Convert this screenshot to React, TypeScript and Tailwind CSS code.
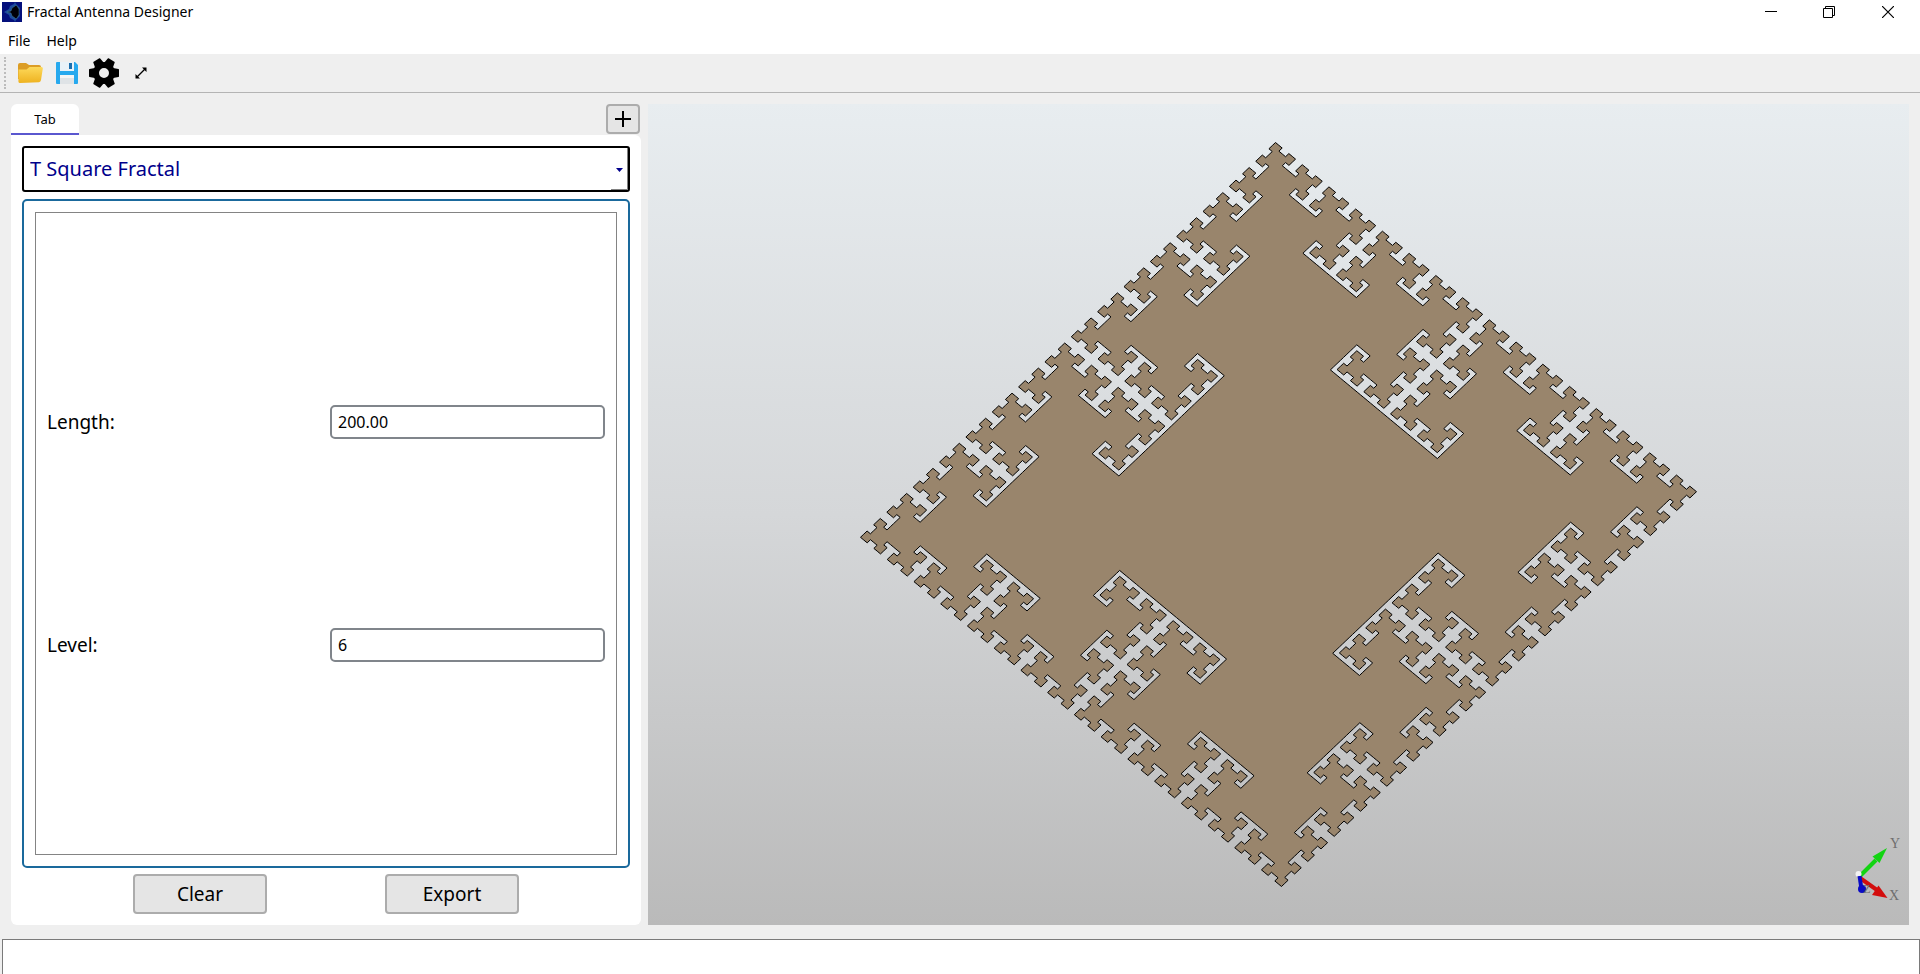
import { useState } from "react";

const LEVELS = 6;
const UNIT = 2 ** (LEVELS - 1);
const EXTENT = 2 * UNIT - 1;
const SIZE = 2 * EXTENT;

/** Outline of the union of all T-square squares, in cells with the origin at the top left corner. */
function tSquarePath(): string {
  const cells = new Uint8Array(SIZE * SIZE);
  const add = (cx: number, cy: number, half: number) => {
    for (let y = cy - half; y < cy + half; y++) {
      cells.fill(1, y * SIZE + cx - half, y * SIZE + cx + half);
    }
    if (half === 1) return;
    for (const sx of [-1, 1]) for (const sy of [-1, 1]) add(cx + sx * half, cy + sy * half, half / 2);
  };
  add(EXTENT, EXTENT, UNIT);

  const filled = (x: number, y: number) => x >= 0 && y >= 0 && x < SIZE && y < SIZE && cells[y * SIZE + x] === 1;
  const edges = new Map<string, [number, number][]>();
  const edge = (x1: number, y1: number, x2: number, y2: number) => {
    const key = `${x1},${y1}`;
    const list = edges.get(key);
    if (list) list.push([x2, y2]);
    else edges.set(key, [[x2, y2]]);
  };
  for (let y = 0; y < SIZE; y++) {
    for (let x = 0; x < SIZE; x++) {
      if (!filled(x, y)) continue;
      if (!filled(x, y - 1)) edge(x, y, x + 1, y);
      if (!filled(x + 1, y)) edge(x + 1, y, x + 1, y + 1);
      if (!filled(x, y + 1)) edge(x + 1, y + 1, x, y + 1);
      if (!filled(x - 1, y)) edge(x, y + 1, x, y);
    }
  }

  let path = "";
  for (const [start, list] of edges) {
    while (list.length > 0) {
      path += `M${start}`;
      let [x, y] = list.pop()!;
      while (`${x},${y}` !== start) {
        path += `L${x},${y}`;
        [x, y] = edges.get(`${x},${y}`)!.pop()!;
      }
      path += "Z";
    }
  }
  return path;
}

const FRACTAL = tSquarePath();

function AppIcon() {
  return (
    <svg viewBox="0 0 20 20" className="size-5" aria-hidden="true">
      <rect width="20" height="20" fill="#04107c" />
      <path d="M2 10l5-3 1-3 4-2 1-2 1 2 4 4-1 4 1 4-4 4-1 2-1-2-4-2-1-3z" fill="#1d4c9c" />
      <path d="M5 10l4-1 1-3 3-2 1-1 1 1 2 3v6l-2 3-1 1-1-1-3-2-1-3z" fill="#000008" stroke="#3f7f9a" strokeWidth=".5" />
    </svg>
  );
}

function FolderIcon() {
  return (
    <svg viewBox="0 0 26 22" className="h-[22px] w-[26px]" aria-hidden="true">
      <defs>
        <linearGradient id="folder" x1="0" y1="0" x2="0" y2="1">
          <stop offset="0" stopColor="#fdd95a" />
          <stop offset="1" stopColor="#eeb220" />
        </linearGradient>
      </defs>
      <path d="M1 3q0-2 2-2h6l3 2h10q2 0 2 2v12H1z" fill="#dc9d25" />
      <path d="M1.500 7.500h8l3-2.500h12q1.500 0 1.300 1.500L24 18q-.3 2-2 2.200L3 21q-1.500 0-1.600-1.500z" fill="url(#folder)" />
    </svg>
  );
}

function SaveIcon() {
  return (
    <svg viewBox="0 0 24 24" className="size-6" aria-hidden="true">
      <path d="M1 2q0-1 1-1h18l3 3v18q0 1-1 1H2q-1 0-1-1z" fill="#27a9ee" />
      <path d="M5 1h14v9H5z" fill="#e9f2f8" />
      <path d="M14 2h3v6h-3z" fill="#1c6fae" />
      <path d="M5 14h14v9H5z" fill="#dfe3e6" />
      <path d="M5 14h14v3H5z" fill="#f5f5f5" />
    </svg>
  );
}

function GearIcon() {
  return (
    <svg viewBox="-15 -15 30 30" className="size-[30px]" aria-hidden="true">
      <circle r="8" fill="none" stroke="#000" strokeWidth="6" />
      {[0, 60, 120, 180, 240, 300].map((angle) => (
        <path key={angle} d="M9-5l5.500 1q.5.200.500.700v6.600q0 .5-.5.700L9 5z" transform={`rotate(${angle})`} />
      ))}
    </svg>
  );
}

function FitIcon() {
  return (
    <svg viewBox="0 0 12 12" className="size-3" aria-hidden="true">
      <path d="M2 10L10 2" stroke="#000" strokeWidth="1.300" />
      <path d="M7 .5h4.500V5zM.5 7v4.500H5z" />
    </svg>
  );
}

function Axes() {
  return (
    <g>
      <path d="M1211 773L1228 756" stroke="#12d412" strokeWidth="4" />
      <path d="M1224.500 752.500L1239 744L1231.500 759z" fill="#12d412" />
      <path d="M1212 774L1229 786" stroke="#d30d0d" strokeWidth="4" />
      <path d="M1230.500 781.500L1239.500 794L1224 791z" fill="#d30d0d" />
      <circle cx="1210.500" cy="770" r="3" fill="#f2f2f2" />
      <path d="M1211.500 772L1213.500 785" stroke="#0a0ac4" strokeWidth="4" />
      <circle cx="1214" cy="785" r="4" fill="#0a0ac4" />
      <g fill="#6e6e6e" fontFamily="Liberation Serif, serif" fontSize="14" textAnchor="middle">
        <text x="1247" y="744">Y</text>
        <text x="1246" y="796">X</text>
        <text x="1219" y="789" fontSize="12">Z</text>
      </g>
    </g>
  );
}

function Viewport() {
  return (
    <main className="min-w-0 flex-1 bg-linear-to-b from-[#e8edf0] via-[#d5d7d9] to-[#bababa]">
      <svg viewBox="0 0 1261 821" className="size-full" role="img" aria-label="T Square Fractal">
        <path
          d={FRACTAL}
          transform="matrix(3.3413 2.7714 -3.2937 3.1333 627.5 38.5)"
          fill="#99856c"
          fillRule="evenodd"
          stroke="#000"
          strokeWidth="1"
          vectorEffect="non-scaling-stroke"
        />
        <Axes />
      </svg>
    </main>
  );
}

function Field({ id, label, value, onChange }: { id: string; label: string; value: string; onChange: (v: string) => void }) {
  return (
    <div className="flex items-center">
      <label htmlFor={id} className="flex-1 text-[19px] leading-6">
        {label}
      </label>
      <input
        id={id}
        value={value}
        onChange={(e) => onChange(e.target.value)}
        className="h-[34px] w-[275px] rounded-[5px] border-2 border-[#80858b] bg-white px-1.5 text-base outline-none"
      />
    </div>
  );
}

export default function App() {
  const [length, setLength] = useState("200.00");
  const [level, setLevel] = useState("6");
  const button = "h-10 w-[134px] rounded-sm border-2 border-[#acacac] bg-[#e5e5e5] text-[19px] leading-6";

  return (
    <div className="flex h-screen flex-col overflow-hidden bg-[#efefef] font-['Noto_Sans','Open_Sans',sans-serif] text-black">
      <header className="bg-white text-sm">
        <div className="flex h-6 items-center justify-between pr-0.5 pl-0.5">
          <h1 className="flex items-center gap-[5px]">
            <AppIcon />
            Fractal Antenna Designer
          </h1>
          <div className="flex">
            <button aria-label="Minimize" className="flex h-6 w-[58px] items-center justify-center">
              <svg viewBox="0 0 12 12" className="size-3" stroke="#000"><path d="M0 5.500h12" /></svg>
            </button>
            <button aria-label="Restore" className="flex h-6 w-[58px] items-center justify-center">
              <svg viewBox="0 0 12 12" className="size-3" fill="none" stroke="#000"><path d="M.5 2.500h9v9h-9zM2.500 2.500v-2h9v9h-2" /></svg>
            </button>
            <button aria-label="Close" className="flex h-6 w-[60px] items-center justify-center">
              <svg viewBox="0 0 12 12" className="size-3" stroke="#000" strokeWidth="1.200"><path d="M0 0l12 12M12 0L0 12" /></svg>
            </button>
          </div>
        </div>
        <nav className="flex h-[30px] items-center gap-4 pt-[3px] pl-2 leading-5">
          <button>File</button>
          <button>Help</button>
        </nav>
      </header>
      <div className="flex h-[39px] shrink-0 items-center border-b border-[#b4b4b4] pl-1">
        <div className="h-8 border-l-2 border-dotted border-[#bcbcbc]" />
        <button aria-label="Open" className="ml-[11px]"><FolderIcon /></button>
        <button aria-label="Save" className="ml-3"><SaveIcon /></button>
        <button aria-label="Settings" className="ml-[10px]"><GearIcon /></button>
        <button aria-label="Fit view" className="ml-4"><FitIcon /></button>
      </div>
      <div className="flex min-h-0 flex-1 gap-[7px] px-[11px] pt-[11px] pb-[14px]">
        <aside className="flex w-[630px] shrink-0 flex-col">
          <div className="flex items-start justify-between">
            <button className="h-[31px] w-[68px] rounded-t-md border-b-2 border-[#5a57cf] bg-white text-[13px] leading-5">Tab</button>
            <button aria-label="Add tab" className="mr-px flex h-[30px] w-[34px] items-center justify-center rounded-sm border-2 border-[#acacac] bg-[#e5e5e5]">
              <svg viewBox="0 0 16 16" className="size-4" stroke="#000" strokeWidth="2"><path d="M0 8h16M8 0v16" /></svg>
            </button>
          </div>
          <div className="flex min-h-0 flex-1 flex-col rounded-tr-md rounded-b-md bg-white p-[11px]">
            <div className="relative">
              <select
                aria-label="Fractal type"
                className="block h-[46px] w-full appearance-none rounded-[3px] border-2 border-black bg-white px-1.5 text-xl text-[#00008b] outline-none"
              >
                <option>T Square Fractal</option>
              </select>
              <svg viewBox="0 0 20 42" className="pointer-events-none absolute right-0.5 bottom-0.5 h-[42px] w-5" aria-hidden="true">
                <path d="M8 20h7l-3.500 4z" fill="#00008b" />
                <path d="M3 41.500h16.500V0" fill="none" stroke="#808080" />
              </svg>
            </div>
            <section className="mt-[7px] flex min-h-0 flex-1 flex-col rounded-[5px] border-2 border-[#1a699c] p-[11px]">
              <div className="flex flex-1 flex-col justify-evenly border border-[#848484] px-[11px] py-1">
                <Field id="length" label="Length:" value={length} onChange={setLength} />
                <Field id="level" label="Level:" value={level} onChange={setLevel} />
              </div>
            </section>
            <div className="mt-[6px] flex justify-center gap-[118px]">
              <button className={button}>Clear</button>
              <button className={button}>Export</button>
            </div>
          </div>
        </aside>
        <Viewport />
      </div>
      <textarea
        aria-label="Output"
        readOnly
        className="ml-0.5 block h-[35px] shrink-0 resize-none border border-b-0 border-[#7a7a7a] bg-white px-1 outline-none"
      />
    </div>
  );
}
